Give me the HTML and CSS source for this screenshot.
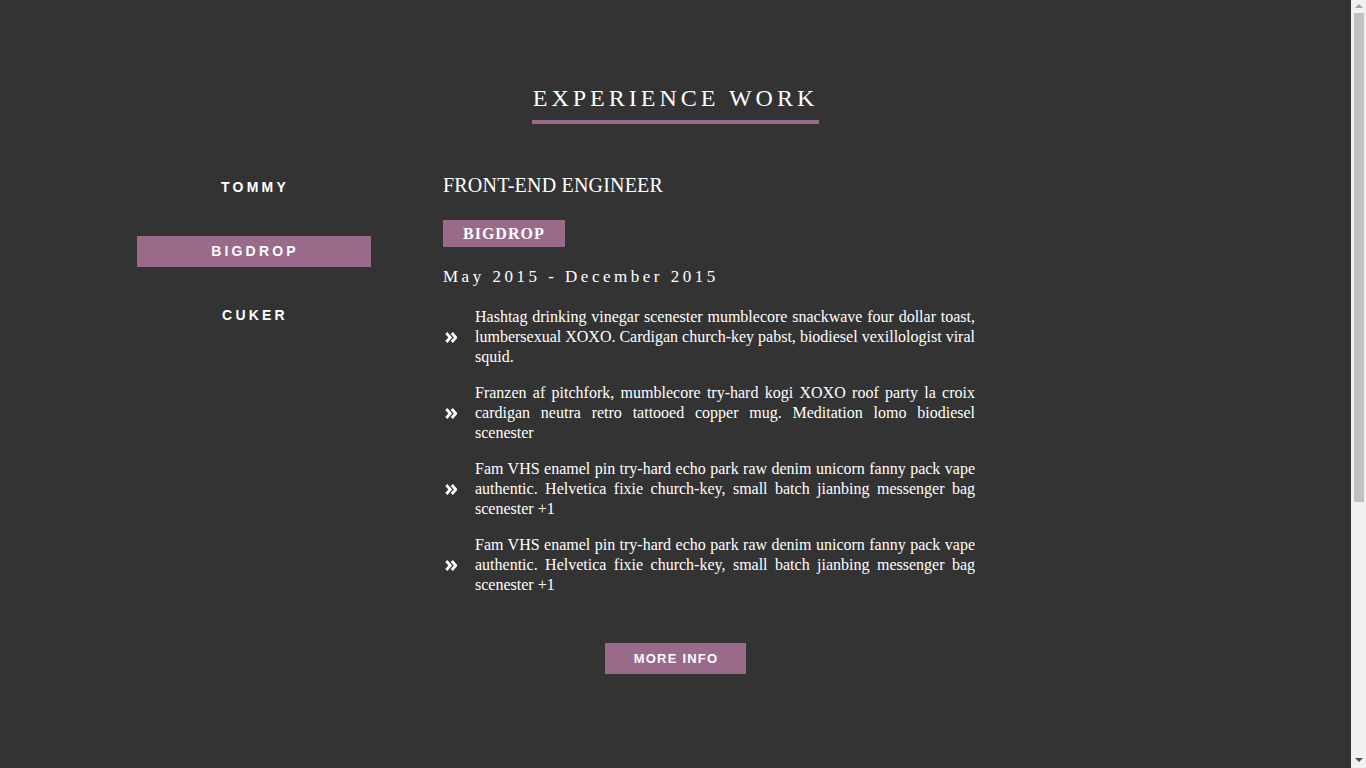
FILE: index.html
```html
<!DOCTYPE html>
<html lang="en">
<head>
<meta charset="utf-8">
<title>Experience Work</title>
<link rel="stylesheet" href="styles.css">
</head>
<body>
<div class="page">
  <div class="title-wrap">
    <h2 class="title">EXPERIENCE WORK</h2>
  </div>
  <div class="row">
    <nav class="tabs">
      <a class="tab" href="#">TOMMY</a>
      <a class="tab active" href="#">BIGDROP</a>
      <a class="tab" href="#">CUKER</a>
    </nav>
    <div class="content">
      <h3 class="job">FRONT-END ENGINEER</h3>
      <span class="badge">BIGDROP</span>
      <div class="date">May 2015 - December 2015</div>
      <ul class="duties">
        <li class="duty">
          <span class="icon"><svg width="12" height="11" viewBox="0 0 12 11"><polyline points="1.3,1 5.3,5.5 1.3,10" fill="none" stroke="#fff" stroke-width="2.8"/><polyline points="6.8,1 10.8,5.5 6.8,10" fill="none" stroke="#fff" stroke-width="2.8"/></svg></span>
          <p class="text">Hashtag drinking vinegar scenester mumblecore snackwave four dollar toast, lumbersexual XOXO. Cardigan church-key pabst, biodiesel vexillologist viral squid.</p>
        </li>
        <li class="duty">
          <span class="icon"><svg width="12" height="11" viewBox="0 0 12 11"><polyline points="1.3,1 5.3,5.5 1.3,10" fill="none" stroke="#fff" stroke-width="2.8"/><polyline points="6.8,1 10.8,5.5 6.8,10" fill="none" stroke="#fff" stroke-width="2.8"/></svg></span>
          <p class="text">Franzen af pitchfork, mumblecore try-hard kogi XOXO roof party la croix cardigan neutra retro tattooed copper mug. Meditation lomo biodiesel scenester</p>
        </li>
        <li class="duty">
          <span class="icon"><svg width="12" height="11" viewBox="0 0 12 11"><polyline points="1.3,1 5.3,5.5 1.3,10" fill="none" stroke="#fff" stroke-width="2.8"/><polyline points="6.8,1 10.8,5.5 6.8,10" fill="none" stroke="#fff" stroke-width="2.8"/></svg></span>
          <p class="text">Fam VHS enamel pin try-hard echo park raw denim unicorn fanny pack vape authentic. Helvetica fixie church-key, small batch jianbing messenger bag scenester +1</p>
        </li>
        <li class="duty">
          <span class="icon"><svg width="12" height="11" viewBox="0 0 12 11"><polyline points="1.3,1 5.3,5.5 1.3,10" fill="none" stroke="#fff" stroke-width="2.8"/><polyline points="6.8,1 10.8,5.5 6.8,10" fill="none" stroke="#fff" stroke-width="2.8"/></svg></span>
          <p class="text">Fam VHS enamel pin try-hard echo park raw denim unicorn fanny pack vape authentic. Helvetica fixie church-key, small batch jianbing messenger bag scenester +1</p>
        </li>
      </ul>
    </div>
  </div>
  <div class="more-wrap">
    <a class="more" href="#">MORE INFO</a>
  </div>
</div>
<aside class="scrollbar" aria-hidden="true">
  <span class="arrow arrow-up"></span>
  <span class="thumb"></span>
  <span class="track-rest"></span>
  <span class="arrow arrow-down"></span>
</aside>
</body>
</html>
```
FILE: styles.css
```css
html, body {
  margin: 0;
  padding: 0;
  background: #333333;
}
body {
  display: flex;
  align-items: flex-start;
  font-family: "Liberation Serif", "Times New Roman", serif;
  color: #ffffff;
}
.page {
  flex: 1;
  min-width: 0;
  box-sizing: border-box;
  min-height: 1165px;
  padding-top: 84px;
}
.title-wrap {
  text-align: center;
}
.title {
  display: inline-block;
  margin: 0;
  font-size: 24px;
  font-weight: normal;
  line-height: 28px;
  letter-spacing: 4px;
  padding: 0 1px 8px 1px;
  border-bottom: 4px solid #9a6a8b;
}
.row {
  display: flex;
  margin-top: 48px;
  padding-left: 137px;
}
.tabs {
  width: 234px;
  flex: none;
  display: flex;
  flex-direction: column;
  gap: 33px;
}
.tab {
  display: block;
  padding: 7px 0 7px 2px;
  line-height: 17px;
  text-align: center;
  font-family: "Liberation Sans", Arial, sans-serif;
  font-weight: bold;
  font-size: 14px;
  letter-spacing: 3.2px;
  color: #ffffff;
  text-decoration: none;
}
.tab.active {
  background: #9a6a8b;
}
.content {
  margin-left: 72px;
  width: 532px;
}
.job {
  margin: 0;
  font-size: 20px;
  font-weight: normal;
  line-height: 26px;
  letter-spacing: 0.2px;
}
.badge {
  display: inline-block;
  margin-top: 22px;
  background: #9a6a8b;
  font-weight: bold;
  font-size: 16px;
  line-height: 19px;
  padding: 4px 20px;
  letter-spacing: 1px;
  vertical-align: top;
}
.date {
  margin-top: 20px;
  font-size: 17px;
  line-height: 20px;
  letter-spacing: 3.5px;
}
.duties {
  list-style: none;
  margin: 20px 0 0;
  padding: 0;
}
.duty {
  display: flex;
  align-items: center;
  margin-bottom: 16px;
}
.duty:last-child {
  margin-bottom: 0;
}
.icon {
  width: 32px;
  flex: none;
  display: flex;
  align-items: center;
  padding-left: 2px;
  box-sizing: border-box;
}
.icon svg {
  display: block;
}
.text {
  margin: 0;
  width: 500px;
  font-size: 16px;
  line-height: 20px;
  text-align: justify;
}
.more-wrap {
  text-align: center;
  margin-top: 48px;
}
.more {
  display: inline-block;
  background: #9a6a8b;
  color: #ffffff;
  text-decoration: none;
  font-family: "Liberation Sans", Arial, sans-serif;
  font-weight: bold;
  font-size: 13px;
  line-height: 15px;
  letter-spacing: 1.2px;
  padding: 8px 28px 8px 29px;
}

/* Scrollbar as shown in the screenshot */
.scrollbar {
  position: sticky;
  top: 0;
  flex: none;
  width: 15px;
  height: 100vh;
  background: #f1f1f1;
  display: flex;
  flex-direction: column;
  align-items: center;
}
.arrow {
  flex: none;
  width: 0;
  height: 0;
  border-left: 4px solid transparent;
  border-right: 4px solid transparent;
}
.arrow-up {
  margin-top: 4px;
  border-bottom: 4px solid #a3a3a3;
}
.thumb {
  flex: none;
  margin-top: 5px;
  width: 10px;
  height: 489px;
  background: #c1c1c1;
}
.track-rest {
  flex: 1;
}
.arrow-down {
  margin-bottom: 6px;
  border-top: 4px solid #505050;
}
```
